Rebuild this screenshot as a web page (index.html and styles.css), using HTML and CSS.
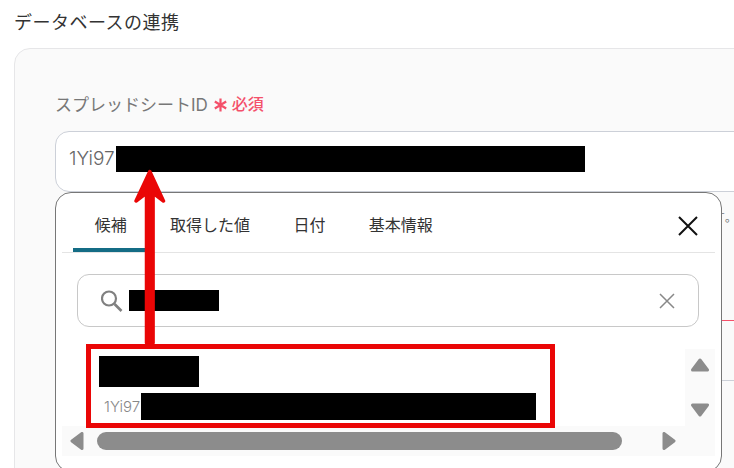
FILE: index.html

```html
<!DOCTYPE html>
<html lang="ja">

<head>
    <meta charset="UTF-8">
    <title>データベースの連携</title>
    <link rel="stylesheet" href="styles.css">
</head>

<body>
    <div id="page">
        <h2 class="title">データベースの連携</h2>

        <div class="panel">
            <div class="labelRow">
                <span class="label">スプレッドシートID</span>
                <svg class="asterisk" width="13" height="14" viewBox="0 0 13 14">
                    <path d="M6.500 0.500 L6.500 13.500 M0.800 3.500 L12.200 10.500 M12.200 3.500 L0.800 10.500" stroke="#f4506a" stroke-width="2.200" fill="none" />
                </svg>
                <span class="required">必須</span>
            </div>
            <div class="field">
                <span class="fieldText">1Yi97</span>
                <span class="mask maskField"></span>
            </div>
            <p class="hint">IDです｡</p>
            <div class="field fieldError"></div>
        </div>

        <div class="popup">
            <div class="tabs">
                <div class="tab tabActive">候補</div>
                <div class="tab">取得した値</div>
                <div class="tab">日付</div>
                <div class="tab">基本情報</div>
                <svg class="closeIcon" width="20" height="20" viewBox="0 0 20 20">
                    <path d="M1 1 L19 19 M19 1 L1 19" stroke="#111" stroke-width="2" fill="none" />
                </svg>
            </div>

            <div class="search">
                <svg class="searchIcon" width="22" height="22" viewBox="0 0 22 22">
                    <circle cx="8" cy="8.500" r="7" stroke="#808080" stroke-width="2.200" fill="none" />
                    <path d="M13.500 14 L20.500 21" stroke="#808080" stroke-width="2.600" fill="none" />
                </svg>
                <span class="mask maskSearch"></span>
                <svg class="clearIcon" width="16" height="16" viewBox="0 0 16 16">
                    <path d="M1 1 L15 15 M15 1 L1 15" stroke="#888" stroke-width="1.500" fill="none" />
                </svg>
            </div>

            <div class="results">
                <div class="resultList">
                    <span class="mask maskName"></span>
                    <div class="resultId">
                        <span class="resultText">1Yi97</span>
                        <span class="mask maskId"></span>
                    </div>
                </div>
                <div class="vScroll">
                    <svg width="18" height="14" viewBox="0 0 18 14">
                        <path d="M9 2 L16.500 12 L1.500 12 Z" fill="#8c8c8c" stroke="#8c8c8c" stroke-width="3" stroke-linejoin="round" />
                    </svg>
                    <svg width="18" height="14" viewBox="0 0 18 14">
                        <path d="M9 12 L16.500 2 L1.500 2 Z" fill="#8c8c8c" stroke="#8c8c8c" stroke-width="3" stroke-linejoin="round" />
                    </svg>
                </div>
            </div>

            <div class="hScroll">
                <svg width="14" height="18" viewBox="0 0 14 18">
                    <path d="M2 9 L12 1.500 L12 16.500 Z" fill="#8c8c8c" stroke="#8c8c8c" stroke-width="3" stroke-linejoin="round" />
                </svg>
                <div class="thumb"></div>
                <svg width="14" height="18" viewBox="0 0 14 18">
                    <path d="M12 9 L2 1.500 L2 16.500 Z" fill="#8c8c8c" stroke="#8c8c8c" stroke-width="3" stroke-linejoin="round" />
                </svg>
            </div>
        </div>

        <div class="redBox"></div>
        <svg class="redArrow" width="40" height="180" viewBox="0 0 40 180">
            <path d="M19.800 4.500 L33.500 34 L23.100 26 L23.100 176 L16.500 176 L16.500 26 L6 34 Z" fill="#ea0606" stroke="#ea0606" stroke-width="3.500" stroke-linejoin="round" />
        </svg>
    </div>
</body>

</html>
```

FILE: styles.css

```css
* {
    box-sizing: border-box;
}

html,
body {
    margin: 0;
    height: 100%;
    overflow: hidden;
    background-color: white;
}

#page {
    position: relative;
    width: 734px;
    height: 468px;
    overflow: hidden;
    padding: 10px 0 0 14px;
    font-family: Inter, "Noto Sans CJK JP", sans-serif;
    color: #333;
}

.title {
    margin: 0;
    font-size: 18px;
    font-weight: 400;
    line-height: 26px;
    letter-spacing: 0.500px;
}

.panel {
    width: 780px;
    height: 480px;
    margin-top: 12px;
    padding: 42px 40px 0;
    background-color: #fafafa;
    border: 1px solid #e6e6e8;
    border-radius: 16px;
}

.labelRow {
    display: flex;
    align-items: center;
    height: 24px;
}

.label {
    font-size: 17px;
    color: #777;
}

.asterisk {
    margin: 4px 0 0 6px;
}

.required {
    margin-left: 5px;
    font-size: 16px;
    font-weight: 500;
    color: #f4506a;
}

.field {
    display: flex;
    width: 720px;
    height: 61px;
    margin-top: 16px;
    padding: 14px 0 0 13px;
    background-color: white;
    border: 1px solid #ccd0d8;
    border-radius: 14px;
}

.fieldText {
    width: 47px;
    font-size: 19px;
    font-weight: 300;
    line-height: 26px;
    color: #666;
}

.fieldError {
    margin-top: 92px;
    border-top-color: #f4506a;
    background-color: #fafafa;
}

.hint {
    width: 676px;
    margin: 16px 0 0;
    font-size: 12px;
    line-height: 20px;
    text-align: right;
    color: #777;
}

.mask {
    display: block;
    background-color: black;
}

.maskField {
    width: 469px;
    height: 26px;
}

.maskSearch {
    width: 90px;
    height: 21px;
    margin-left: 6px;
}

.maskName {
    width: 100px;
    height: 31px;
}

.maskId {
    width: 395px;
    height: 27px;
}

.popup {
    position: absolute;
    left: 55px;
    top: 192px;
    width: 667px;
    height: 280px;
    padding: 0 6px;
    background-color: white;
    border: 1px solid #777;
    border-radius: 16px;
}

.tabs {
    display: flex;
    align-items: stretch;
    height: 60px;
    border-bottom: 1px solid #e4e4e4;
    padding-left: 11px;
}

.tab {
    padding: 16px 21.700px 0;
    font-size: 16px;
    line-height: 32px;
    color: #333;
}

.tabActive {
    border-bottom: 4px solid #146c85;
    border-radius: 4px 4px 0 0;
}

.closeIcon {
    margin: 23px 17px 0 auto;
}

.search {
    display: flex;
    align-items: center;
    width: 622px;
    height: 53px;
    margin: 21px 0 0 15px;
    padding-left: 23px;
    border: 1px solid #c8c8c8;
    border-radius: 12px;
}

.clearIcon {
    margin-left: auto;
    margin-right: 23px;
}

.results {
    display: flex;
    justify-content: space-between;
    height: 77px;
    margin-top: 22px;
}

.resultList {
    padding: 7px 0 0 37px;
}

.resultId {
    display: flex;
    align-items: center;
    margin-top: 6px;
    padding-left: 5px;
}

.resultText {
    width: 37px;
    font-size: 15px;
    font-weight: 300;
    color: #888;
}

.vScroll {
    display: flex;
    flex-direction: column;
    align-items: center;
    justify-content: space-between;
    width: 30px;
    padding: 9px 0;
    background-color: #fafafa;
}

.hScroll {
    display: flex;
    align-items: center;
    height: 30px;
    padding: 0 8px;
    background-color: #fafafa;
}

.thumb {
    width: 525px;
    height: 18px;
    margin: 0 40px 0 13px;
    background-color: #8c8c8c;
    border-radius: 9px;
}

.redBox {
    position: absolute;
    left: 86px;
    top: 344px;
    width: 469px;
    height: 84px;
    border: 5px solid #ea0606;
}

.redArrow {
    position: absolute;
    left: 130px;
    top: 167px;
}
```
